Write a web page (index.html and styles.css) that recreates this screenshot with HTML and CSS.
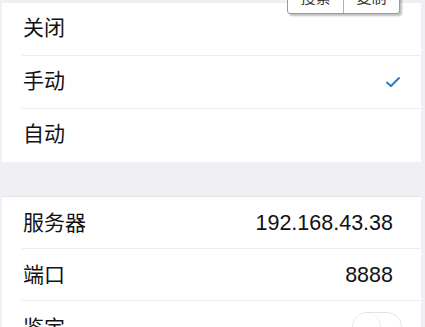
FILE: index.html
```html
<!DOCTYPE html>
<html>
<head>
<meta charset="utf-8">
<link rel="stylesheet" href="styles.css">
</head>
<body>
<div class="page">
  <div class="card first">
    <div class="row"><div class="inner"><span class="label">关闭</span></div></div>
    <div class="row"><div class="inner"><span class="label">手动</span>
      <svg class="check" width="16" height="12" viewBox="0 0 16 12"><path d="M2 6.5 L6 10 L14 2" fill="none" stroke="#2e7bc4" stroke-width="2" stroke-linecap="round" stroke-linejoin="round"/></svg>
    </div></div>
    <div class="row"><div class="inner last"><span class="label">自动</span></div></div>
  </div>
  <div class="gap"></div>
  <div class="card second">
    <div class="row"><div class="inner"><span class="label">服务器</span><span class="value">192.168.43.38</span></div></div>
    <div class="row"><div class="inner"><span class="label">端口</span><span class="value">8888</span></div></div>
    <div class="row"><div class="inner last"><span class="label">鉴定</span><span class="switch"><span class="knob"></span></span></div></div>
  </div>
  <div class="menu"><span class="item">搜索</span><span class="item">复制</span></div>
</div>
</body>
</html>
```
FILE: styles.css
```css
html, body { margin: 0; padding: 0; }
body {
  background: #efeff4;
  font-family: "Liberation Sans", "Noto Sans CJK SC", sans-serif;
  color: #111;
  width: 425px;
  height: 327px;
  overflow: hidden;
}
.page {
  position: relative;
  padding: 3px 4px 0 2px;
}
.card { background: #fff; }
.first .row { height: 53px; }
.second { border-top: 1px solid #e2e2e8; }
.second .row { height: 52px; }
.row {
  box-sizing: border-box;
  padding-left: 20px;
}
.inner {
  box-sizing: border-box;
  height: 100%;
  display: flex;
  align-items: center;
  justify-content: space-between;
  padding-left: 1px;
  padding-right: 19px;
  border-bottom: 1px solid #ececf0;
}
.inner.last { border-bottom: none; }
.label {
  font-size: 21px;
  line-height: 1;
  position: relative;
  top: -2px;
}
.second .label { top: 0; }
.value {
  font-size: 21.5px;
  line-height: 1;
  margin-right: 9px;
  position: relative;
  top: 1px;
}
.check { margin-right: 1px; }
.gap { height: 34px; }
.switch {
  position: relative;
  box-sizing: border-box;
  width: 50px;
  height: 30px;
  border: 1.5px solid #e3e3e6;
  border-radius: 15px;
  background: #fff;
}
.knob {
  position: absolute;
  left: 0;
  top: 0;
  width: 27px;
  height: 27px;
  border-radius: 50%;
  background: #fff;
  box-shadow: 1px 0 1px rgba(0,0,0,0.08);
}
.menu {
  position: absolute;
  left: 287px;
  top: -20px;
  width: 113px;
  height: 34px;
  box-sizing: border-box;
  background: #fff;
  border: 1px solid #9a9a9a;
  border-radius: 3px;
  box-shadow: 2px 2px 2px rgba(0,0,0,0.25);
  display: flex;
}
.item {
  flex: 1;
  display: flex;
  align-items: center;
  justify-content: center;
  font-size: 15px;
  color: #333;
  line-height: 1;
}
.item + .item { border-left: 1px solid #b0b0b0; }
```
